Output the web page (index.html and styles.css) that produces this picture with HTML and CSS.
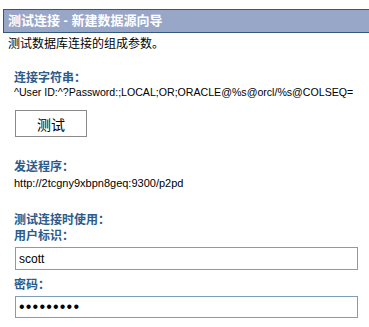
FILE: index.html
```html
<!DOCTYPE html>
<html lang="zh">

<head>
    <meta charset="UTF-8">
    <title>测试连接</title>
    <link rel="stylesheet" href="styles.css">
</head>

<body>
    <div class="header">测试连接 - 新建数据源向导</div>
    <p class="intro">测试数据库连接的组成参数。</p>

    <div class="section conn">
        <div class="label">连接字符串：</div>
        <div class="value">^User ID:^?Password:;LOCAL;OR;ORACLE@%s@orcl/%s@COLSEQ=</div>
        <button class="btn">测试</button>
    </div>

    <div class="section sender">
        <div class="label">发送程序：</div>
        <div class="value url">http://2tcgny9xbpn8geq:9300/p2pd</div>
    </div>

    <div class="section use">
        <div class="label">测试连接时使用：</div>
        <div class="label">用户标识：</div>
        <input type="text" class="field" value="scott">
        <div class="label pwd">密码：</div>
        <input type="password" class="field pass" value="tiger1234">
    </div>
</body>

</html>
```

FILE: styles.css
```css
* {
    margin: 0;
    padding: 0;
    box-sizing: border-box;
}

body {
    background: #fff;
    font-family: "Liberation Sans", "Noto Sans CJK SC", sans-serif;
    font-size: 12px;
    color: #000;
}

.header {
    margin: 9px 0 0 3px;
    height: 24px;
    line-height: 22px;
    padding-left: 4px;
    background: #98a6c7;
    border: 1px solid #34587c;
    border-right: 0;
    color: #fff;
    font-weight: bold;
    font-size: 13px;
}

.intro {
    margin: 1px 0 0 8px;
    font-size: 12px;
    line-height: 20px;
}

.section {
    padding-left: 14px;
}

.label {
    color: #2d5b89;
    font-weight: bold;
    font-size: 12px;
    line-height: 16px;
}

.conn {
    margin-top: 16px;
}

.value {
    font-size: 10.6px;
    line-height: 12px;
}

.url {
    margin-top: 2px;
    font-size: 11px;
}

.btn {
    display: block;
    width: 72px;
    height: 27px;
    margin: 12px 0 0 1px;
    background: #fff;
    border: 1px solid #8a8a8a;
    font-family: "Noto Sans CJK SC", sans-serif;
    font-size: 14px;
    color: #000;
}

.sender {
    margin-top: 22px;
}

.use {
    margin-top: 23px;
}

.field {
    display: block;
    width: 343px;
    height: 23px;
    margin: 3px 0 0 1px;
    padding-left: 3px;
    border: 1px solid #7f9db9;
    font-family: "Liberation Sans", sans-serif;
    font-size: 12px;
    color: #000;
    outline: none;
}

.pass {
    height: 22px;
    font-size: 16px;
    letter-spacing: 1.2px;
}

.pwd {
    margin-top: 7px;
}
```
